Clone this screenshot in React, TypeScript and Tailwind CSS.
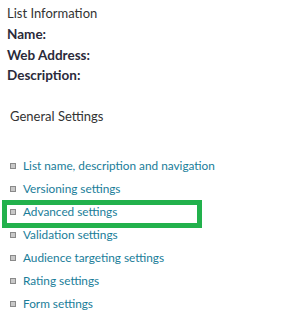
import React from "react";

const links = [
  "List name, description and navigation",
  "Versioning settings",
  "Advanced settings",
  "Validation settings",
  "Audience targeting settings",
  "Rating settings",
  "Form settings",
];

export default function App() {
  return (
    <div
      className="w-[301px] h-[314px] bg-white overflow-hidden text-[#444]"
      style={{ fontFamily: 'Lato, "Noto Sans", sans-serif' }}
    >
      <div className="pl-[7px] pt-[3px]">
        <div className="text-[13px] leading-[20px] text-[#333]">List Information</div>
        <div className="mt-[1px] flex flex-col text-[13.5px] font-bold leading-[20.5px] text-[#2a2a3a]">
          <span>Name:</span>
          <span>Web Address:</span>
          <span>Description:</span>
        </div>
      </div>
      <div className="pl-[10px] mt-[20px] text-[13px] leading-[20px] text-[#333]">General Settings</div>
      <ul className="mt-[29px] flex flex-col">
        {links.map((l) => {
          const hl = l === "Advanced settings";
          return (
            <li key={l} className="relative flex items-center h-[23px] pl-[10px]">
              <span className="w-[6px] h-[6px] bg-[#c8c8c8] border border-[#8a8a8a] mr-[7px] shrink-0" />
              <span className="text-[11.8px] text-[#197d99] whitespace-nowrap">{l}</span>
              {hl && (
                <span className="absolute left-[2px] top-[-1px] w-[200px] h-[28px] border-[5px] border-[#22b14c] pointer-events-none" />
              )}
            </li>
          );
        })}
      </ul>
    </div>
  );
}
